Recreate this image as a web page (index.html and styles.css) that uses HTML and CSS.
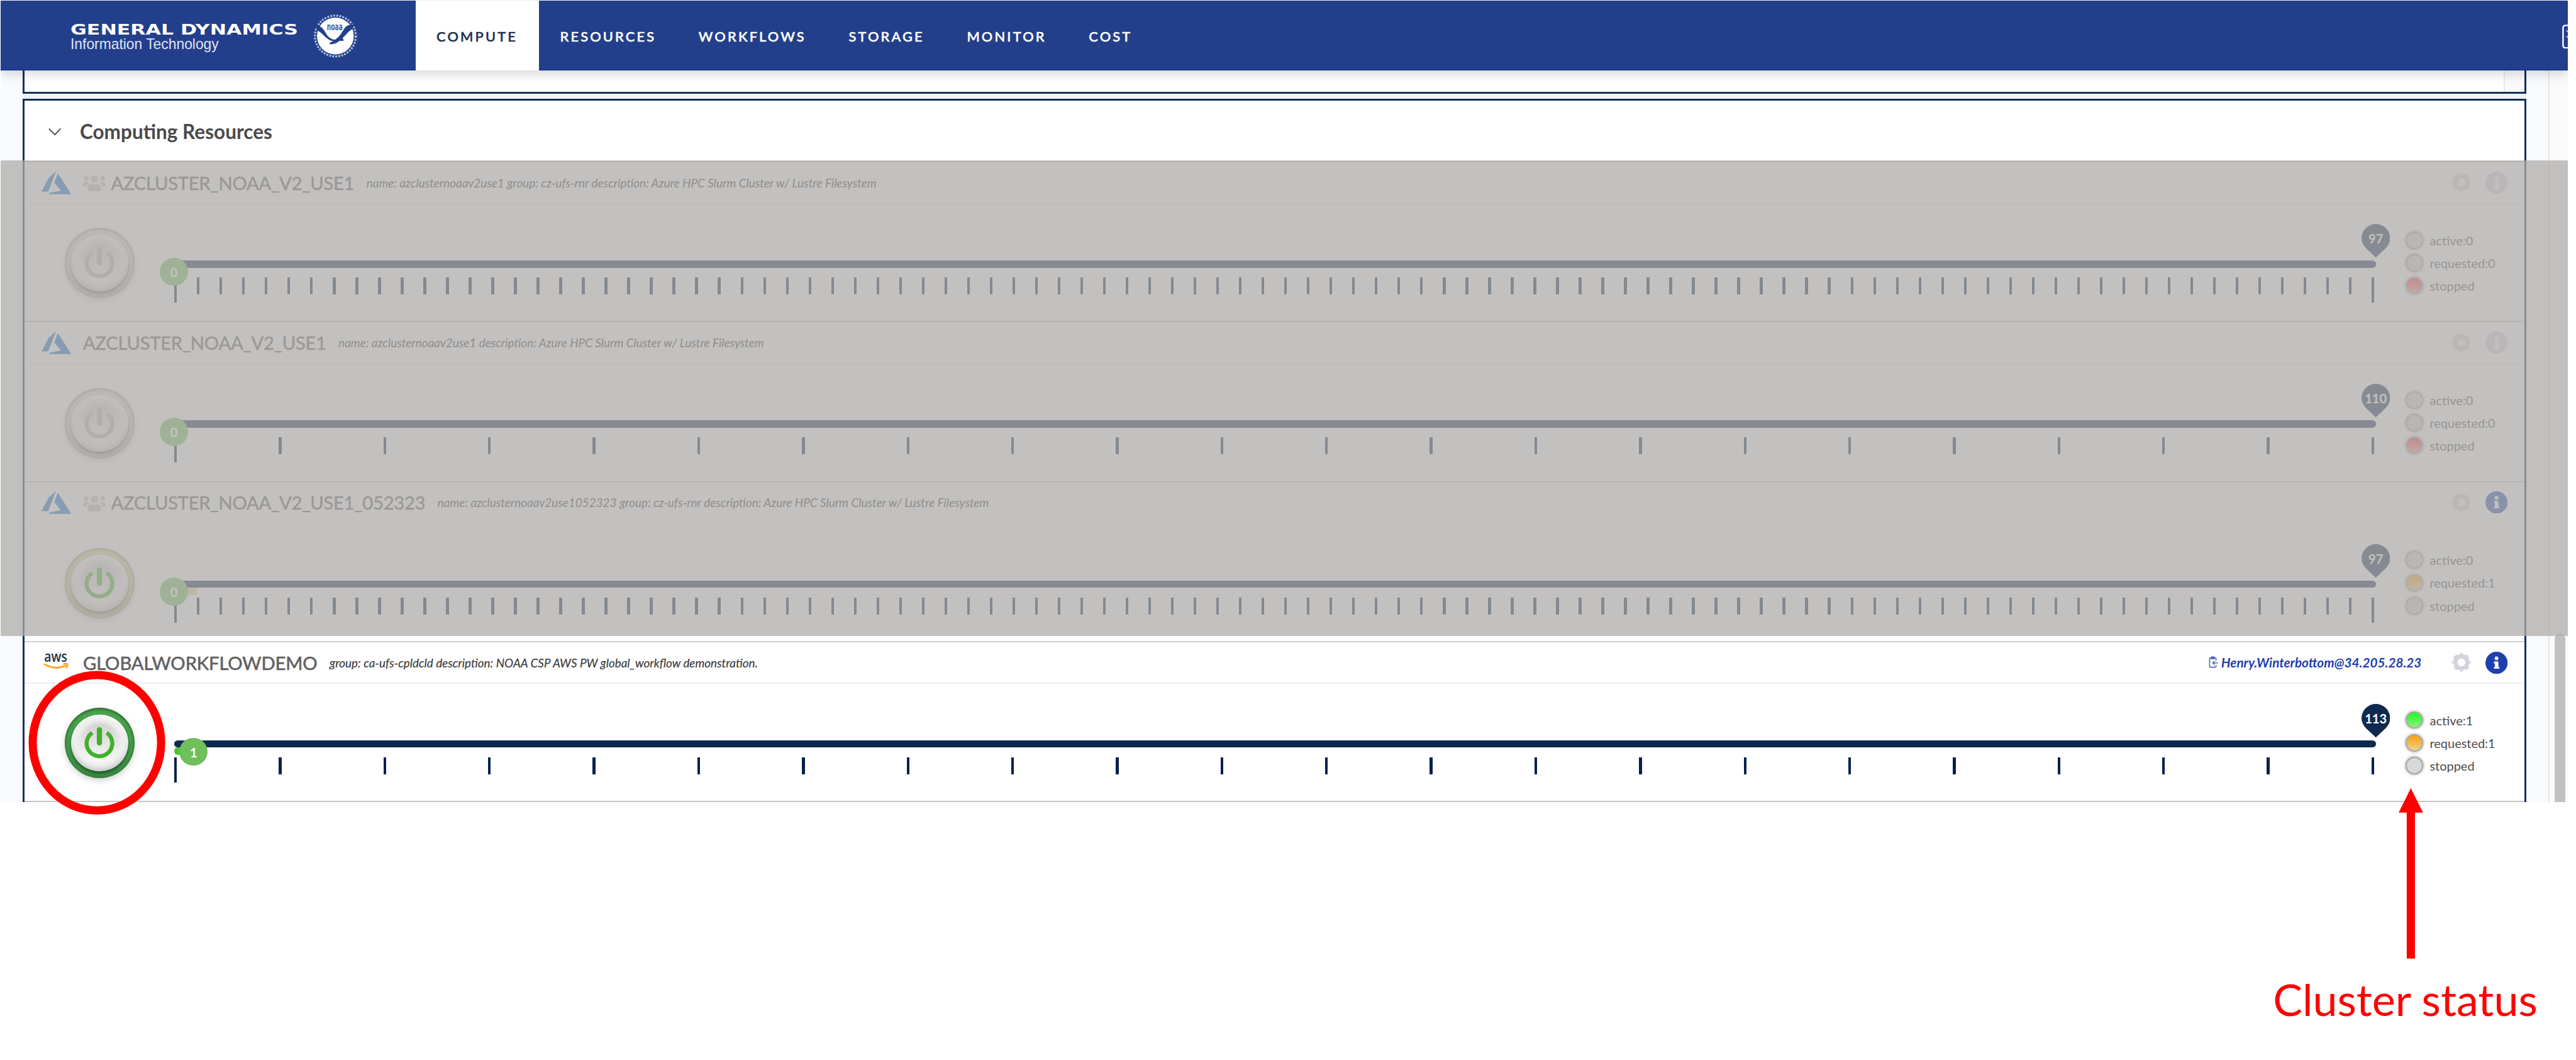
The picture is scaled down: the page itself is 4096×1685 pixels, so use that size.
FILE: index.html
```html
<!DOCTYPE html>
<html lang="en">
<head>
<meta charset="utf-8">
<title>Computing Resources</title>
<link rel="stylesheet" href="styles.css">
</head>
<body>
<svg class="defs" aria-hidden="true">
  <symbol id="azure" viewBox="0 0 51 40">
    <path fill="#0f6cd0" d="M25 0 12 12 0 35h11.500zM28 3.500 22 20 33 33.500 13 37.500v2h38z"/>
  </symbol>
  <symbol id="users" viewBox="0 0 39 28">
    <g fill="#c6c6c6"><circle cx="19.500" cy="7" r="6.500"/><circle cx="5.500" cy="6" r="4"/><circle cx="33.500" cy="6" r="4"/>
    <path d="M8 23c0-5 3-8 6.500-8 3 2 7 2 10 0 3.500 0 6.500 3 6.500 8 0 3-1 5-3.500 5h-16C9 28 8 26 8 23zM0 17c0-3 1.500-5 4-5h4c1 0 2 .5 2.500 1-3 2-4 4-4.500 7H2c-1.500 0-2-1-2-3zM39 17c0-3-1.500-5-4-5h-4c-1 0-2 .5-2.500 1 3 2 4 4 4.500 7h4c1.500 0 2-1 2-3z"/></g>
  </symbol>
  <symbol id="power" viewBox="0 0 52 54">
    <path d="M13.500 9.500A22 22 0 1 0 38.500 9.500" fill="none" stroke="currentColor" stroke-width="7"/>
    <path d="M26 4.200v22.500" fill="none" stroke="currentColor" stroke-width="9" stroke-linecap="round"/>
  </symbol>
  <symbol id="gear" viewBox="-17 -17 34 34">
    <path fill="#d1d5db" fill-rule="evenodd" d="M0-17 4.200-12.400 10.500-13.500 11.300-9.300 13.500-10.500 12.400-4.200 17 0 12.400 4.200 13.500 10.500 9.300 11.300 10.500 13.500 4.200 12.400 0 17-4.200 12.400-10.500 13.500-11.300 9.300-13.500 10.500-12.400 4.200-17 0-12.400-4.200-13.500-10.500-9.300-11.300-10.500-13.500-4.200-12.400zM0-6.800A6.800 6.800 0 1 0 0 6.800 6.800 6.800 0 1 0 0-6.800z"/>
  </symbol>
  <symbol id="info" viewBox="0 0 38 38">
    <circle cx="19" cy="19" r="19" fill="currentColor"/>
    <path fill="#fff" d="M19 8.200a3.200 3.200 0 1 1 0 6.400 3.200 3.200 0 0 1 0-6.400zM14.500 16.800h7.700v9.400h1.600v3h-9.300v-3h1.700v-6.400h-1.700z"/>
  </symbol>
  <symbol id="pin" viewBox="0 0 49 58">
    <path d="M24.500 0C38 0 49 11 49 24.500c0 7-3.500 12.500-8 17.500L24.500 57.500 8 42C3.500 37 0 31.500 0 24.500 0 11 11 0 24.500 0z" fill="#0f2a4f"/>
  </symbol>
</svg>

<div class="app">
  <header class="topbar">
    <div class="brand">
      <svg class="wordmark" viewBox="0 0 392 60">
        <text class="gd" x="0" y="28" textLength="390" lengthAdjust="spacingAndGlyphs">GENERAL DYNAMICS</text>
        <text class="it" x="0" y="52.500" textLength="254" lengthAdjust="spacingAndGlyphs">Information Technology</text>
      </svg>
      <svg class="seal" viewBox="-38 -38 76 76">
        <circle r="35" fill="none" stroke="#b4c0de" stroke-width="3.500" stroke-dasharray="3 2.200"/>
        <circle r="31.500" fill="#fff"/>
        <path fill="#233f8c" d="M-33-18C-22-18-19-8-13 0-9 4-5 7 0 6 8 1 12-8 17-15 21-19 26-20 33-20L29-12C23-9 19-3 15 1 12 3 12 5 14 6L14 8 6 8.500C3 12-2 14-10 14L-9 11-3 9C-12 8-17 1-22-3-25-6-28-9-32-9z"/>
        <text class="noaa" x="-14.500" y="-9.800" textLength="27" lengthAdjust="spacingAndGlyphs">noaa</text>
      </svg>
    </div>
    <nav class="nav">
      <a class="tab active"><span>COMPUTE</span></a>
      <a class="tab"><span>RESOURCES</span></a>
      <a class="tab"><span>WORKFLOWS</span></a>
      <a class="tab"><span>STORAGE</span></a>
      <a class="tab"><span>MONITOR</span></a>
      <a class="tab"><span>COST</span></a>
    </nav>
    <svg class="doc" viewBox="0 0 10 42">
      <path d="M12 1.500H6Q1.500 1.500 1.500 6V35.500Q1.500 40 6 40H12" fill="none" stroke="#fff" stroke-width="2.600"/>
      <path d="M7 11.500h4M7 21h4" stroke="#9fb0d8" stroke-width="2.500"/>
    </svg>
  </header>

  <div class="page">
    <main class="content">
      <section class="panel previous"><div class="inner-track"></div></section>
      <section class="panel resources">
        <h2 class="panel-title">
          <svg class="chevron" viewBox="0 0 22 14"><path d="M1 1.500 11 12 21 1.500" fill="none" stroke="#4a4a4a" stroke-width="2"/></svg>
          <span>Computing Resources</span>
        </h2>

        <article class="row">
          <div class="head">
            <svg class="provider"><use href="#azure"/></svg><svg class="users"><use href="#users"/></svg>
            <span class="name n1">AZCLUSTER_NOAA_V2_USE1</span>
            <em class="desc">name: azclusternoaav2use1 group: cz-ufs-rnr description: Azure HPC Slurm Cluster w/ Lustre Filesystem</em>
            <svg class="gear"><use href="#gear"/></svg><svg class="info off"><use href="#info"/></svg>
          </div>
          <div class="body">
            <div class="power idle"><div class="cap"><svg><use href="#power"/></svg></div></div>
            <div class="slider">
              <div class="track"></div><div class="fill"></div>
              <div class="ticks dense"></div>
              <div class="value">0</div>
              <div class="max"><svg><use href="#pin"/></svg><span>97</span></div>
            </div>
            <ul class="status"><li><i></i><span>active:0</span></li><li><i></i><span>requested:0</span></li><li><i class="red"></i><span>stopped</span></li></ul>
          </div>
        </article>

        <article class="row">
          <div class="head">
            <svg class="provider"><use href="#azure"/></svg>
            <span class="name n1">AZCLUSTER_NOAA_V2_USE1</span>
            <em class="desc">name: azclusternoaav2use1 description: Azure HPC Slurm Cluster w/ Lustre Filesystem</em>
            <svg class="gear"><use href="#gear"/></svg><svg class="info off"><use href="#info"/></svg>
          </div>
          <div class="body">
            <div class="power idle"><div class="cap"><svg><use href="#power"/></svg></div></div>
            <div class="slider">
              <div class="track"></div><div class="fill"></div>
              <div class="ticks"></div>
              <div class="value">0</div>
              <div class="max"><svg><use href="#pin"/></svg><span>110</span></div>
            </div>
            <ul class="status"><li><i></i><span>active:0</span></li><li><i></i><span>requested:0</span></li><li><i class="red"></i><span>stopped</span></li></ul>
          </div>
        </article>

        <article class="row">
          <div class="head">
            <svg class="provider"><use href="#azure"/></svg><svg class="users"><use href="#users"/></svg>
            <span class="name n1">AZCLUSTER_NOAA_V2_USE1_052323</span>
            <em class="desc">name: azclusternoaav2use1052323 group: cz-ufs-rnr description: Azure HPC Slurm Cluster w/ Lustre Filesystem</em>
            <svg class="gear"><use href="#gear"/></svg><svg class="info"><use href="#info"/></svg>
          </div>
          <div class="body">
            <div class="power pending"><div class="cap"><svg><use href="#power"/></svg></div></div>
            <div class="slider">
              <div class="track"></div><div class="fill requested"></div>
              <div class="ticks dense"></div>
              <div class="value">0</div>
              <div class="max"><svg><use href="#pin"/></svg><span>97</span></div>
            </div>
            <ul class="status"><li><i></i><span>active:0</span></li><li><i class="orange"></i><span>requested:1</span></li><li><i></i><span>stopped</span></li></ul>
          </div>
        </article>

        <article class="row">
          <div class="head">
            <svg class="provider" viewBox="-4.500 -3 51 40">
              <text class="aws" x="0" y="15.500" textLength="39.500" lengthAdjust="spacingAndGlyphs">aws</text>
              <path d="M1 19.500c11 7.500 26 7.500 36 2" fill="none" stroke="#ff9f1c" stroke-width="3.200" stroke-linecap="round"/>
              <path d="M32.500 19.500c3-1.500 6-1.500 7.500-.5.500 2.500-.5 5-2.500 7.500" fill="none" stroke="#ff9f1c" stroke-width="2.200"/>
            </svg>
            <span class="name n4">GLOBALWORKFLOWDEMO</span>
            <em class="desc">group: ca-ufs-cpldcld description: NOAA CSP AWS PW global_workflow demonstration.</em>
            <a class="ssh"><svg viewBox="0 0 16 21"><path d="M12.500 8V4.500Q12.500 3 11 3H3Q1.500 3 1.500 4.500V17.500Q1.500 19 3 19H11Q12.500 19 12.500 17.500V15M4.500 1.500h5v3h-5zM15.500 11.500H7M10 8.500 7 11.500 10 14.500" fill="none" stroke="#4a65c2" stroke-width="1.700"/></svg><span>Henry.Winterbottom@34.205.28.23</span></a>
            <svg class="gear"><use href="#gear"/></svg><svg class="info"><use href="#info"/></svg>
          </div>
          <div class="body">
            <div class="power on"><div class="cap"><svg><use href="#power"/></svg></div></div>
            <div class="slider">
              <div class="track"></div><div class="fill running"></div>
              <div class="ticks"></div>
              <div class="value one">1</div>
              <div class="max"><svg><use href="#pin"/></svg><span>113</span></div>
            </div>
            <ul class="status"><li><i class="green"></i><span>active:1</span></li><li><i class="orange"></i><span>requested:1</span></li><li><i></i><span>stopped</span></li></ul>
          </div>
        </article>
      </section>
    </main>
    <aside class="scrollbar"><div class="thumb"></div></aside>
  </div>
  <div class="dim"></div>
</div>

<svg class="notes" viewBox="0 0 4413 1815">
  <ellipse cx="166" cy="1272" rx="110" ry="116" fill="none" stroke="#f00" stroke-width="14"/>
  <path d="M4130 1350 4151 1391.700H4137.100V1641.700H4123V1391.700H4109.200z" fill="#f00"/>
  <text x="3894" y="1740" textLength="453" lengthAdjust="spacingAndGlyphs">Cluster status</text>
</svg>
</body>
</html>
```
FILE: styles.css
```css
/* 1rem is one hundred design units */
html { font-size: 92.817px; }
* { box-sizing: border-box; }
body {
  margin: 0;
  position: relative;
  width: 4096px;
  height: 18.15rem;
  overflow: hidden;
  background: #fff;
  font-family: Lato, "Noto Sans", sans-serif;
}
.defs { position: absolute; width: 0; height: 0; }
svg { display: block; flex: none; }

.app {
  position: relative;
  display: flex;
  flex-direction: column;
  width: 43.98rem;
  height: 13.735rem;
  margin-left: .01rem;
  padding-top: .01rem;
  overflow: hidden;
}

/* top bar */
.topbar {
  position: relative;
  z-index: 2;
  flex: none;
  display: flex;
  height: 1.2rem;
  background: #233f8c;
  border-bottom: .022rem solid #19388a;
  box-shadow: 0 .03rem .2rem rgba(0, 0, 0, .2);
}
.brand { display: flex; align-items: center; width: 7.11rem; padding-left: 1.2rem; }
.wordmark { width: 3.92rem; height: .6rem; margin-top: .025rem; }
.wordmark text { fill: #fff; font-family: "DejaVu Sans", sans-serif; }
.wordmark .gd { font-weight: 700; font-size: 25px; }
.wordmark .it { font-family: "Liberation Sans", sans-serif; font-size: 25.500px; fill: #dfe5f3; }
.seal { width: .76rem; height: .76rem; margin: .03rem 0 0 .24rem; }
.noaa { font: 700 17px "DejaVu Sans", sans-serif; fill: #4a62a3; }
.nav { display: flex; height: 1.2rem; }
.tab {
  display: flex;
  align-items: center;
  padding: .02rem .364rem 0;
  color: #fff;
  font-weight: 500;
  font-size: .235rem;
  letter-spacing: .034rem;
  -webkit-text-stroke: .006rem currentColor;
}
.tab.active { padding-left: .358rem; background: #fff; color: #1b3050; }
.doc { width: .1rem; height: .42rem; margin: .405rem 0 0 auto; }

/* page */
.page { flex: 1; display: flex; min-height: 0; background: #f8fafd; }
.content { width: 43.65rem; padding: 0 .385rem 0 .38rem; }
.panel { border: .033rem solid #12305a; background: #fff; }
.previous { height: .4rem; border-top: 0; display: flex; justify-content: flex-end; }
.inner-track { width: .35rem; background: #fafafa; border-left: .022rem solid #e8e8e8; }
.resources { margin-top: .08rem; height: 12.3rem; box-shadow: 0 -.08rem 0 #f0f2f2; }
.panel-title {
  display: flex;
  align-items: center;
  height: 1.035rem;
  margin: 0;
  padding: .03rem 0 0 .41rem;
  font-size: .34rem;
  color: #4a4a4a;
}
.chevron { width: .22rem; height: .14rem; margin-right: .315rem; }
.scrollbar { flex: 1; background: #fafafa; border-left: .022rem solid #e6e6e6; }
.thumb { width: .19rem; margin: 9.64rem 0 0 .08rem; height: 3.2rem; border-radius: .095rem; background: #c1c1c1; }

/* cluster row */
.row { height: 2.74rem; border-top: .025rem solid #cfcfcf; }
.row:last-child { height: 2.765rem; border-bottom: .025rem solid #c4c4c4; }
.head {
  display: flex;
  align-items: center;
  height: .718rem;
  padding: 0 .285rem 0 .29rem;
  border-bottom: .022rem solid #efefef;
}
.provider { width: .51rem; height: .4rem; overflow: visible; }
.aws { font: 600 26px "Open Sans", sans-serif; fill: #252f3e; }
.users { width: .39rem; height: .28rem; margin: .02rem -.11rem 0 .2rem; }
.name { margin-left: .2rem; font-size: .315rem; color: #606060; white-space: nowrap; -webkit-text-stroke: .006rem #606060; }
.n1 { letter-spacing: -.0032rem; }
.n4 { letter-spacing: -.0013rem; }
.desc { margin-left: .21rem; font-size: .2035rem; color: #3c3c3c; white-space: nowrap; -webkit-text-stroke: .002rem #3c3c3c; }
.ssh { display: flex; align-items: center; gap: .055rem; margin-left: auto; color: #1f3fae; font-size: .223rem; font-weight: 700; font-style: italic; }
.ssh svg { width: .16rem; height: .21rem; }
.gear { width: .34rem; height: .34rem; margin-left: auto; }
.ssh + .gear { margin-left: .515rem; }
.info { width: .38rem; height: .38rem; margin-left: .24rem; color: #1e40af; }
.info.off { color: #d4d4dc; }

.body { display: flex; height: 2rem; padding-left: .683rem; }
.power {
  flex: none;
  display: flex;
  align-items: center;
  justify-content: center;
  width: 1.205rem;
  height: 1.205rem;
  margin-top: .408rem;
  border-radius: 50%;
  background: linear-gradient(#ddd, #ccc);
  box-shadow: 0 .04rem .12rem rgba(0, 0, 0, .18), inset 0 .02rem .05rem rgba(0, 0, 0, .3), inset 0 -.04rem .12rem rgba(0, 0, 0, .18);
}
.power.on {
  background: linear-gradient(#4aa64a, #3c9448);
  box-shadow: 0 .04rem .12rem rgba(0, 0, 0, .18), inset 0 .03rem .06rem rgba(0, 0, 0, .32), inset 0 -.02rem .06rem rgba(0, 0, 0, .18);
}
.power.pending { background: linear-gradient(#dcd49a, #cfc89c); }
.cap {
  display: flex;
  align-items: center;
  justify-content: center;
  width: .97rem;
  height: .97rem;
  border-radius: 50%;
  background: radial-gradient(closest-side, transparent 62%, #efefef 82%), linear-gradient(#d2d2d2 15%, #f6f6f6 80%);
  box-shadow: 0 .04rem .06rem rgba(0, 0, 0, .45), inset 0 .03rem .05rem #fff, inset 0 -.05rem .07rem rgba(0, 0, 0, .16);
}
.cap svg { width: .52rem; height: .54rem; color: #43b02a; }
.idle .cap svg { color: #bfb2b0; }

.slider { position: relative; flex: none; width: 37.72rem; height: 2rem; margin-left: .67rem; padding-top: .965rem; }
.track { height: .123rem; border-radius: .06rem; background: #0f2a4f; }
.fill { height: .123rem; }
.fill.requested { width: .39rem; background: #e6d68c; }
.fill.running { width: .34rem; border-radius: .06rem 0 0 .06rem; background: #4cc52c; }
.ticks {
  width: 37.69rem;
  height: .433rem;
  margin-top: .045rem;
  background:
    linear-gradient(#04204a, #04204a) 0 0 / .047rem .433rem no-repeat,
    repeating-linear-gradient(90deg, #04204a 0 .047rem, transparent .047rem 1.7925rem) 0 0 / 100% .29rem no-repeat;
}
.ticks.dense {
  background:
    linear-gradient(#04204a, #04204a) 0 0 / .047rem .433rem no-repeat,
    linear-gradient(#04204a, #04204a) 100% 0 / .047rem .433rem no-repeat,
    repeating-linear-gradient(90deg, #04204a 0 .047rem, transparent .047rem .38808rem) 0 0 / 100% .29rem no-repeat;
}
.value {
  position: absolute;
  left: -.24rem;
  top: .917rem;
  width: .48rem;
  height: .48rem;
  border-radius: 50%;
  background: #6fbf5c;
  color: #fff;
  font-weight: 700;
  font-size: .225rem;
  line-height: .49rem;
  text-align: center;
}
.value.one { left: .095rem; }
.max { position: absolute; right: -.245rem; top: .338rem; width: .49rem; height: .58rem; }
.max svg { width: .49rem; height: .58rem; }
.max span { position: absolute; inset: 0; line-height: .5rem; text-align: center; color: #fff; font-weight: 700; font-size: .217rem; }
.status { flex: none; margin: .42rem 0 0 .515rem; padding: 0; list-style: none; }
.status li { display: flex; align-items: center; gap: .11rem; height: .39rem; font-size: .215rem; color: #4c4c4c; }
.status i {
  width: .3rem;
  height: .3rem;
  border: .022rem solid #a6a6a6;
  border-radius: 50%;
  background: #d8d8d8;
  box-shadow: 0 0 .06rem rgba(0, 0, 0, .4);
}
.status .green { background: linear-gradient(#1dff1d, #94e884); }
.status .orange { background: linear-gradient(#fb9f10, #ecd28e); }
.status .red { background: linear-gradient(#ff2a3a, #f0a49a); }

/* shade over the inactive clusters */
.dim { position: absolute; left: 0; right: 0; top: 2.745rem; height: 8.15rem; background: rgba(175, 172, 170, .75); }

/* annotations */
.notes { position: absolute; left: 0; top: 0; width: 4096px; height: 18.15rem; }
.notes text { font: 400 76px Lato, sans-serif; fill: #f00; }
```
